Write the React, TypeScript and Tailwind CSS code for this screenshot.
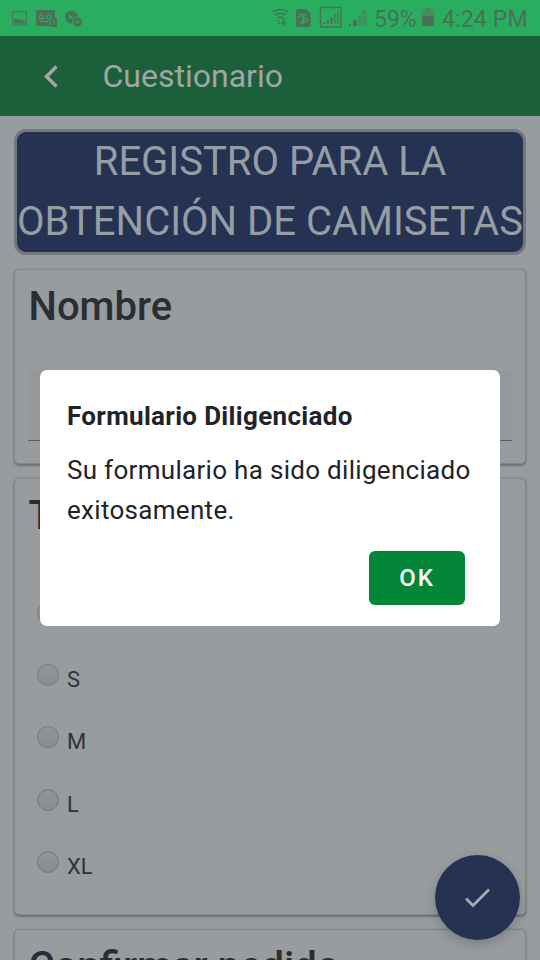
import type { ReactNode } from "react";

function Card({ title, className, children }: { title: string; className: string; children?: ReactNode }) {
  return (
    <section
      className={`shrink-0 rounded-[5px] border border-[#84888b] bg-[#989c9f] px-[13px] shadow-[0_2px_2px_#6e7275,0_0_2px_#7b7f82] ${className}`}
    >
      <h2 className="pt-[7px] pl-[0.5px] text-[40px] leading-[60px] font-medium text-[#2a2e33]">{title}</h2>
      {children}
    </section>
  );
}

function Option({ label }: { label: string }) {
  return (
    <label className="flex h-[62.4px] items-start pl-[9px]">
      <span className="size-[22px] shrink-0 rounded-full border border-[#74787b] bg-linear-to-b from-[#929699] to-[#888c8f]" />
      <span className="mt-[1px] ml-2 text-[22px] leading-[30px] text-[#2f3337]">{label}</span>
    </label>
  );
}

function StatusBar() {
  return (
    <div className="flex h-9 shrink-0 items-center justify-between bg-[#29ae60] text-[#4a7057]">
      <svg width="90" height="36" viewBox="0 0 90 36" fill="none">
        <rect x="12.7" y="11.7" width="13.6" height="13.3" stroke="currentColor" strokeWidth="1" />
        <path d="M14 23.500v-3.500l2-1.500 1 1 2-1 2 2 1-1 3 2v2z" fill="currentColor" />
        <path d="M36 10h19v8h2v9h-7v-1H36z" fill="currentColor" />
        <circle cx="41.5" cy="17" r="2" stroke="#29ae60" strokeWidth="1.2" />
        <circle cx="49" cy="17" r="2" stroke="#29ae60" strokeWidth="1.2" />
        <path d="M40 21.500h9M50.500 20v5M54 20.500v4" stroke="#29ae60" />
        <circle cx="71.5" cy="17" r="6.5" fill="currentColor" />
        <path d="M69 15l5 2-4 2z" fill="#29ae60" />
        <circle cx="77.5" cy="22" r="5" fill="currentColor" stroke="#29ae60" />
        <path d="M77.5 19.500v3h2.500M75 22l2 2" stroke="#29ae60" strokeWidth="1" />
      </svg>
      <div className="flex h-9 items-center">
        <svg width="98" height="36" viewBox="0 0 98 36" fill="none">
          <g stroke="currentColor" strokeWidth="1.6">
            <path d="M1 12q7-5 14.500 0M3 15.200q5.200-4 10.500 0M5.500 18.300q2.800-2.300 5.500 0" />
          </g>
          <path d="M11.500 18v5M9.500 22l2 3 2-3M6 23.500h2M5.500 20.500l2 1" stroke="currentColor" strokeWidth="1.3" />
          <path d="M26 9h8.500l4 4v12q0 2-2 2H26q-2 0-2-2V11q0-2 2-2z" fill="currentColor" />
          <circle cx="31" cy="18.500" r="4.400" stroke="#29ae60" strokeWidth="1.4" strokeDasharray="10 3.800" />
          <path d="M30 14l1 3.500 2 1-2 1.500v3" stroke="#29ae60" strokeWidth="1.6" />
          <path d="M48.500 7.500h20.500v19.500H48.500z" stroke="currentColor" strokeWidth="1.3" />
          <path d="M51.500 24v-1.500h2V24zM55 24v-4h2v4zM58.500 24v-7h2v7z" fill="currentColor" />
          <path d="M62 24V14h2v10zM65 24V11h2v13z" fill="currentColor" opacity=".6" />
          <path d="M77 26v-2h2v2zM81 26v-6h4v6z" fill="currentColor" />
          <path d="M86 26V15h3.500v11zM90 26V10h5v16z" fill="currentColor" opacity=".35" />
        </svg>
        <span className="mt-[3px] ml-[4px] w-[45px] text-[23px] leading-9 whitespace-nowrap">59%</span>
        <svg className="ml-[3px]" width="12" height="36" viewBox="0 0 12 36">
          <path d="M3 8h6v2h3v7H0v-7h3z" fill="#438e5c" />
          <path d="M0 16h12v9q0 1-1 1H1q-1 0-1-1z" fill="currentColor" />
        </svg>
        <span className="mt-[3px] ml-[8px] w-[98px] text-[23px] leading-9 tracking-[0.15px] whitespace-nowrap">4:24 PM</span>
      </div>
    </div>
  );
}

export default function App() {
  return (
    <div className="relative flex h-[960px] w-[540px] flex-col overflow-hidden bg-[#989c9f] font-['Roboto','Liberation_Sans',sans-serif]">
      <StatusBar />
      <header className="flex h-20 shrink-0 items-center bg-[#1c603b] text-[#a0a7a5]">
        <svg className="ml-[42px]" width="18" height="26" viewBox="0 0 18 26" fill="none">
          <path d="M14.500 3.500L4.500 13.500l10 10" stroke="currentColor" strokeWidth="3.500" />
        </svg>
        <h1 className="ml-[42.5px] text-[32px] leading-10">Cuestionario</h1>
      </header>
      <main className="flex min-h-0 flex-1 flex-col overflow-hidden px-[14px] pt-[13px]">
        <div className="flex h-[126px] shrink-0 flex-col items-center rounded-[12px] border-[3px] border-[#74787e] bg-[#253252] text-[40px] leading-[60px] text-[#969da5]">
          <span className="whitespace-nowrap">REGISTRO PARA LA</span>
          <span className="whitespace-nowrap">OBTENCIÓN DE CAMISETAS</span>
        </div>
        <Card title="Nombre" className="mt-[14px] h-[195px]">
          <div className="mt-[34px] h-[70px] border-b border-[#5c6063] bg-[#94989b]" />
        </Card>
        <Card title="Talla" className="mt-[14px] h-[437px]">
          <div className="mt-[55.5px]">
            <Option label="XS" />
            <Option label="S" />
            <Option label="M" />
            <Option label="L" />
            <Option label="XL" />
          </div>
        </Card>
        <Card title="Confirmar pedido" className="mt-[14px] h-[200px]" />
      </main>
      <button className="absolute top-[855px] left-[435px] flex size-[85px] items-center justify-center rounded-full bg-[#253252] shadow-[0_4px_12px_rgba(0,0,0,0.2)]">
        <svg width="27" height="22" viewBox="0 0 27 22" fill="none">
          <path d="M2 11.500l7 7L25 2.500" stroke="#a5aaaf" strokeWidth="2.800" />
        </svg>
      </button>
      <div role="dialog" className="absolute top-[370px] left-[40px] flex h-[256px] w-[460px] flex-col rounded-[7px] bg-white pt-[26px] pr-[35px] pl-[27px] text-[#212329]">
        <h3 className="text-[26px] leading-10 font-bold tracking-[0.32px]">Formulario Diligenciado</h3>
        <p className="mt-[14px] text-[26px] leading-10 tracking-[0.3px] whitespace-nowrap">
          Su formulario ha sido diligenciado
          <br />
          exitosamente.
        </p>
        <button className="mt-[21px] h-[54px] w-[96px] self-end rounded-[6px] bg-[#038638] text-[24px] font-medium tracking-[2px] text-white">
          OK
        </button>
      </div>
    </div>
  );
}
